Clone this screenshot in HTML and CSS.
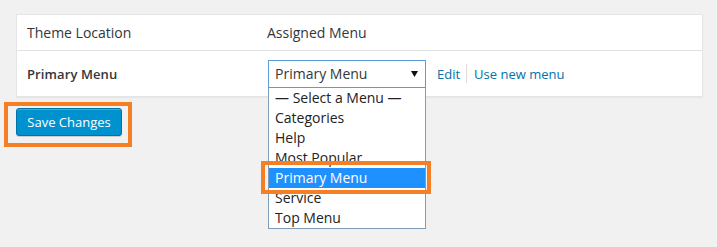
FILE: index.html
```html
<!DOCTYPE html>
<html>
<head>
<meta charset="utf-8">
<link rel="stylesheet" href="styles.css">
</head>
<body>
<div class="page">
  <div class="table">
    <div class="row head">
      <div class="col1">Theme Location</div>
      <div class="col2">Assigned Menu</div>
    </div>
    <div class="row body">
      <div class="col1 strong">Primary Menu</div>
      <div class="col2 controls">
        <div class="selectwrap">
          <div class="select">
            <span>Primary Menu</span>
            <svg class="arrow" width="7" height="6" viewBox="0 0 7 6"><path d="M0 0H7L3.5 6Z" fill="#111"/></svg>
          </div>
          <ul class="dropdown">
            <li>— Select a Menu —</li>
            <li>Categories</li>
            <li>Help</li>
            <li>Most Popular</li>
            <li class="sel">Primary Menu</li>
            <li>Service</li>
            <li>Top Menu</li>
          </ul>
          <div class="mark mark-item"></div>
        </div>
        <a class="link">Edit</a><span class="sep"></span><a class="link">Use new menu</a>
      </div>
    </div>
  </div>
  <div class="actions">
    <button class="btn">Save Changes</button>
    <div class="mark mark-btn"></div>
  </div>
</div>
</body>
</html>
```

FILE: styles.css
```css
html, body {
  margin: 0;
  padding: 0;
  background: #f1f1f1;
  font-family: "Open Sans", "Liberation Sans", sans-serif;
  color: #32373c;
}
body {
  min-height: 247px;
}
.page {
  padding: 14px 14px 0 16px;
}
.table {
  width: 687px;
  box-sizing: border-box;
  background: #fff;
  border: 1px solid #e5e5e5;
  box-shadow: 0 1px 1px rgba(0,0,0,0.04);
}
.row {
  display: flex;
  align-items: center;
}
.row.head {
  height: 35px;
  border-bottom: 1px solid #e1e1e1;
  font-size: 14px;
}
.row.body {
  height: 45px;
  font-size: 14px;
}
.col1 {
  width: 240px;
  padding-left: 10px;
  box-sizing: border-box;
}
.col1.strong {
  font-weight: 600;
  font-size: 13px;
  letter-spacing: 0.1px;
}
.col2 {
  padding-left: 10px;
}
.controls {
  display: flex;
  align-items: center;
  padding-left: 11px;
}
.selectwrap {
  position: relative;
  width: 158px;
  height: 28px;
}
.select {
  box-sizing: border-box;
  width: 158px;
  height: 28px;
  border: 1px solid #5b9dd9;
  display: flex;
  align-items: center;
  justify-content: space-between;
  padding: 0 7px 0 6px;
  font-size: 14px;
  color: #32373c;
  background: #fff;
}
.arrow {
  display: block;
  margin-top: 1px;
}
.dropdown {
  position: absolute;
  left: 0;
  top: 28px;
  width: 158px;
  box-sizing: border-box;
  margin: 0;
  padding: 0;
  list-style: none;
  background: #fff;
  border: 1px solid #7f9db9;
  border-top: none;
  z-index: 2;
}
.dropdown li {
  height: 20px;
  line-height: 20px;
  font-size: 14px;
  padding-left: 6px;
  color: #222;
}
.dropdown li.sel {
  background: #1e90ff;
  color: #fff;
}
.mark {
  position: absolute;
  border: 4px solid #f47f24;
  box-sizing: border-box;
  z-index: 3;
}
.mark-item {
  left: -7px;
  top: 101px;
  width: 170px;
  height: 33px;
}
.link {
  color: #0073aa;
  font-size: 13px;
}
.selectwrap + .link {
  margin-left: 11px;
}
.sep {
  display: inline-block;
  width: 1px;
  height: 19px;
  background: #ddd;
  margin: 0 7px 0 6px;
}
.actions {
  position: relative;
  padding-top: 11px;
}
.btn {
  width: 106px;
  height: 28px;
  box-sizing: border-box;
  background: #0092cf;
  border: 1px solid #0073aa;
  border-radius: 3px;
  color: #fff;
  font-family: "Open Sans", "Liberation Sans", sans-serif;
  font-size: 13px;
  padding: 0;
  box-shadow: inset 0 1px 0 rgba(120,200,230,0.5), 0 1px 0 rgba(0,0,0,0.15);
}
.mark-btn {
  left: -12px;
  top: 5px;
  width: 128px;
  height: 45px;
}
```
